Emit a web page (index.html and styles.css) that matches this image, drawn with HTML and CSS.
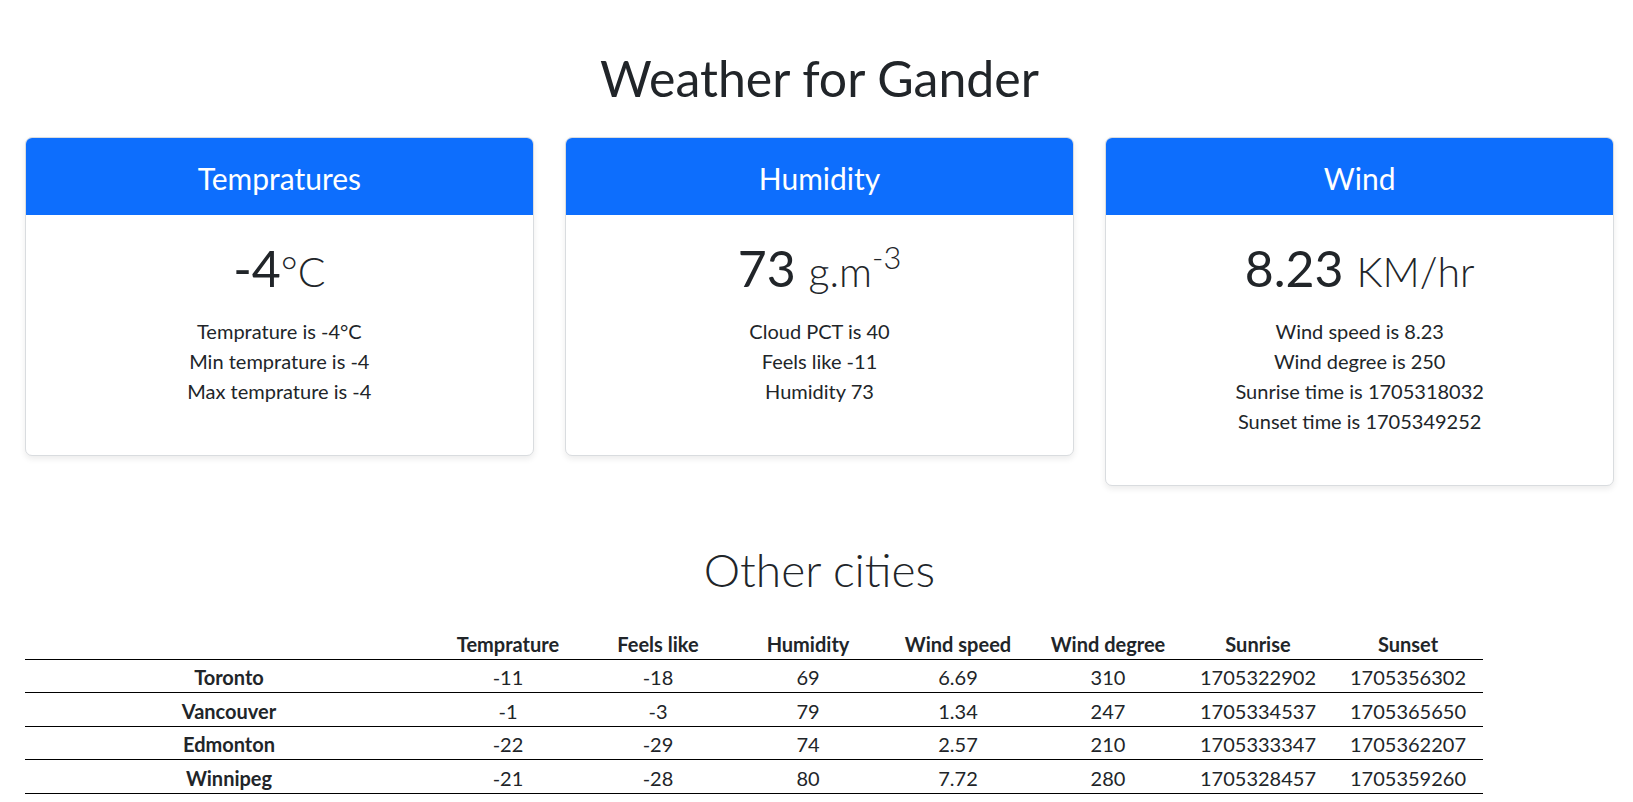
FILE: index.html
```html
<!DOCTYPE html>
<html lang="en">
<head>
<meta charset="utf-8">
<title>Weather for Gander</title>
<link rel="stylesheet" href="styles.css">
</head>
<body>
<main class="page">
  <h1 class="title">Weather for Gander</h1>

  <section class="cards">
    <div class="card">
      <div class="card-header">Tempratures</div>
      <div class="card-body">
        <div class="big-value">-4<span class="unit">°C</span></div>
        <div class="details">
          <div>Temprature is -4°C</div>
          <div>Min temprature is -4</div>
          <div>Max temprature is -4</div>
        </div>
      </div>
    </div>

    <div class="card">
      <div class="card-header">Humidity</div>
      <div class="card-body">
        <div class="big-value">73 <span class="unit">g.m<sup class="sup">-3</sup></span></div>
        <div class="details">
          <div>Cloud PCT is 40</div>
          <div>Feels like -11</div>
          <div>Humidity 73</div>
        </div>
      </div>
    </div>

    <div class="card">
      <div class="card-header">Wind</div>
      <div class="card-body">
        <div class="big-value">8.23 <span class="unit">KM/hr</span></div>
        <div class="details">
          <div>Wind speed is 8.23</div>
          <div>Wind degree is 250</div>
          <div>Sunrise time is 1705318032</div>
          <div>Sunset time is 1705349252</div>
        </div>
      </div>
    </div>
  </section>

  <h2 class="subtitle">Other cities</h2>

  <table class="cities">
    <colgroup>
      <col class="col-name">
      <col class="col-data"><col class="col-data"><col class="col-data"><col class="col-data">
      <col class="col-data"><col class="col-data"><col class="col-data">
    </colgroup>
    <thead>
      <tr>
        <th></th>
        <th>Temprature</th>
        <th>Feels like</th>
        <th>Humidity</th>
        <th>Wind speed</th>
        <th>Wind degree</th>
        <th>Sunrise</th>
        <th>Sunset</th>
      </tr>
    </thead>
    <tbody>
      <tr>
        <th>Toronto</th><td>-11</td><td>-18</td><td>69</td><td>6.69</td><td>310</td><td>1705322902</td><td>1705356302</td>
      </tr>
      <tr>
        <th>Vancouver</th><td>-1</td><td>-3</td><td>79</td><td>1.34</td><td>247</td><td>1705334537</td><td>1705365650</td>
      </tr>
      <tr>
        <th>Edmonton</th><td>-22</td><td>-29</td><td>74</td><td>2.57</td><td>210</td><td>1705333347</td><td>1705362207</td>
      </tr>
      <tr>
        <th>Winnipeg</th><td>-21</td><td>-28</td><td>80</td><td>7.72</td><td>280</td><td>1705328457</td><td>1705359260</td>
      </tr>
    </tbody>
  </table>
</main>
</body>
</html>
```

FILE: styles.css
```css
* {
  box-sizing: border-box;
}

html, body {
  margin: 0;
  padding: 0;
  background: #ffffff;
}

body {
  font-family: "Lato", "Open Sans", "Liberation Sans", sans-serif;
  color: #212529;
  font-size: 20px;
  line-height: 1.5;
}

.page {
  padding: 0 19px 0 25px;
}

.title {
  margin: 48px 0 0;
  font-size: 50px;
  font-weight: 400;
  line-height: 1.2;
  text-align: center;
}

.cards {
  display: flex;
  align-items: flex-start;
  gap: 31.5px;
  margin-top: 29px;
}

.card {
  flex: 1 1 0;
  min-width: 0;
  border: 1px solid #d9dcdf;
  border-radius: 7px;
  overflow: hidden;
  background: #fff;
  box-shadow: 0 3px 6px rgba(0, 0, 0, 0.08);
}

.card-header {
  height: 77px;
  display: flex;
  align-items: center;
  justify-content: center;
  padding-top: 3px;
  background: #0d6efd;
  color: #ffffff;
  font-size: 30px;
  line-height: 1.2;
}

.card-body {
  padding: 23px 16px 49px;
  text-align: center;
}

.big-value {
  font-size: 50px;
  line-height: 1.2;
  font-weight: 400;
}

.unit {
  font-size: 41px;
  font-weight: 300;
}

.sup {
  font-size: 75%;
  line-height: 0;
  vertical-align: 0.58em;
}

.details {
  margin-top: 18px;
  font-size: 20px;
  line-height: 30px;
}

.subtitle {
  margin: 56px 0 0;
  font-size: 46px;
  font-weight: 300;
  line-height: 1.2;
  text-align: center;
}

.cities {
  margin-top: 29px;
  width: 1457px;
  border-collapse: collapse;
  table-layout: fixed;
  font-size: 20px;
  line-height: 30px;
}

.col-name {
  width: 408px;
}

.col-data {
  width: 150px;
}

.cities th,
.cities td {
  padding: 2.5px 0 0;
  text-align: center;
  border-bottom: 1px solid #000000;
  white-space: nowrap;
}

.cities th {
  font-weight: 700;
}

.cities td {
  font-weight: 400;
}
```
